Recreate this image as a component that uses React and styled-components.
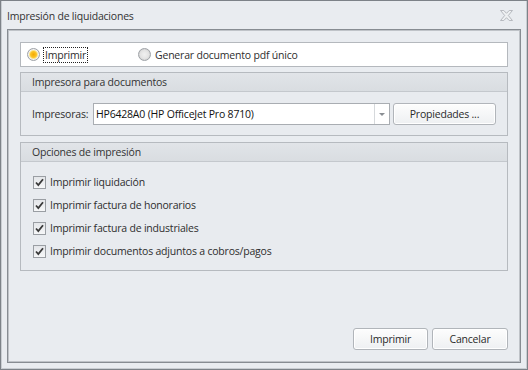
import React from "react";
import styled, { createGlobalStyle } from "styled-components";

const Global = createGlobalStyle`
  html, body { margin: 0; padding: 0; background: #e9ecf0; }
  * { box-sizing: border-box; }
  body {
    font-family: "Open Sans", "Noto Sans", sans-serif;
    font-size: 10.5px;
    letter-spacing: -0.2px;
    color: #2e2e2e;
  }
`;

const Window = styled.div`
  width: 528px;
  height: 370px;
  border: 1px solid #7d8288;
  box-shadow: inset 1px 0 0 #c9cdd2, inset -1px 0 0 #c9cdd2, inset 0 -1px 0 #c9cdd2;
  background: #e9ecf0;
  display: flex;
  flex-direction: column;
`;

const TitleBar = styled.div`
  height: 28px;
  flex: none;
  display: flex;
  align-items: center;
  justify-content: space-between;
  padding: 1px 14px 0 6px;
  color: #333;
`;

const Frame = styled.div`
  flex: 1;
  margin: 0 6px 6px 6px;
  border: 1px solid #878c92;
  box-shadow: inset 0 0 0 1px #bfc3c8;
  padding: 12px;
  display: flex;
  flex-direction: column;
`;

const RadioBar = styled.div`
  height: 25px;
  background: #fff;
  border: 1px solid #b4b8bd;
  display: flex;
  align-items: center;
  padding-left: 6px;
  flex: none;
`;

const RadioItem = styled.label`
  display: flex;
  align-items: center;
  gap: 4px;
  width: ${(p) => p.$w || "auto"};
`;

const RadioDot = styled.span`
  width: 13px;
  height: 13px;
  border-radius: 50%;
  border: 1px solid #9ea2a7;
  background: ${(p) =>
    p.$on
      ? "radial-gradient(circle, #f5a900 0, #fbc52a 3px, #fde48a 4px, #f3f3f3 5px, #d8d8d8 6px)"
      : "radial-gradient(circle, #f0f0f0 0, #e4e4e4 4px, #cfcfcf 6px)"};
  flex: none;
`;

const FocusText = styled.span`
  outline: 1px dotted #222;
  outline-offset: 0;
  padding: 0 1px;
  line-height: 14px;
`;

const Group = styled.div`
  border: 1px solid #b6babf;
  background: #e8ebef;
  margin-top: ${(p) => p.$mt}px;
  flex: none;
`;

const GroupHeader = styled.div`
  height: 19px;
  background: linear-gradient(#e1e4e8, #d9dde1);
  border-bottom: 1px solid #c4c8cd;
  display: flex;
  align-items: center;
  padding-left: 11px;
  color: #333;
`;

const PrinterBody = styled.div`
  padding: 11px 10px 10px 11px;
  display: flex;
  align-items: center;
`;

const Label = styled.span`
  width: 61px;
  flex: none;
`;

const Combo = styled.div`
  width: 297px;
  height: 22px;
  background: #fff;
  border: 1px solid #a9adb2;
  display: flex;
  align-items: stretch;
`;

const ComboText = styled.div`
  flex: 1;
  display: flex;
  align-items: center;
  padding-left: 2px;
  color: #111;
`;

const ComboArrow = styled.div`
  width: 15px;
  border-left: 1px solid #d6d9dc;
  display: flex;
  align-items: center;
  justify-content: center;
  &::after {
    content: "";
    border-left: 3px solid transparent;
    border-right: 3px solid transparent;
    border-top: 3px solid #8a8e93;
  }
`;

const Button = styled.button`
  font: inherit;
  letter-spacing: inherit;
  color: #2a2a2a;
  width: ${(p) => p.$w}px;
  height: 22px;
  margin-left: ${(p) => p.$ml || 0}px;
  border: 1px solid #b1b5ba;
  border-radius: 3px;
  background: linear-gradient(#fdfdfd, #eef0f2);
  box-shadow: inset 0 0 0 1px #fff;
  padding: 0;
  display: flex;
  align-items: center;
  justify-content: center;
`;

const OptionsBody = styled.div`
  padding: 13px 0 12px 12px;
  display: flex;
  flex-direction: column;
  gap: 9px;
`;

const CheckRow = styled.label`
  display: flex;
  align-items: center;
  gap: 4px;
  height: 14px;
`;

const CheckBox = styled.span`
  width: 13px;
  height: 13px;
  border: 1px solid #9a9ea3;
  background: linear-gradient(#e4e6e9, #f6f7f8);
  display: flex;
  align-items: center;
  justify-content: center;
  flex: none;
`;

const Footer = styled.div`
  margin-top: auto;
  display: flex;
  justify-content: flex-end;
`;

const Check = () => (
  <svg width="9" height="9" viewBox="0 0 9 9">
    <path d="M1 4.5 L3.3 7 L8 1.2" fill="none" stroke="#3a3a3a" strokeWidth="1.8" />
  </svg>
);

const CloseIcon = () => (
  <svg width="13" height="11" viewBox="0 0 14 12">
    <path
      d="M0.5 0.5 H4 L7 3.6 L10 0.5 H13.5 L9 6 L13.5 11.5 H10 L7 8.4 L4 11.5 H0.5 L5 6 Z"
      fill="#eef0f2"
      stroke="#b0b4b9"
      strokeWidth="1"
    />
  </svg>
);

const options = [
  "Imprimir liquidación",
  "Imprimir factura de honorarios",
  "Imprimir factura de industriales",
  "Imprimir documentos adjuntos a cobros/pagos",
];

export default function App() {
  return (
    <>
      <Global />
      <Window>
        <TitleBar>
          <span>Impresión de liquidaciones</span>
          <CloseIcon />
        </TitleBar>
        <Frame>
          <RadioBar>
            <RadioItem $w="111px">
              <RadioDot $on />
              <FocusText>Imprimir</FocusText>
            </RadioItem>
            <RadioItem>
              <RadioDot />
              <span>Generar documento pdf único</span>
            </RadioItem>
          </RadioBar>
          <Group $mt={5}>
            <GroupHeader>Impresora para documentos</GroupHeader>
            <PrinterBody>
              <Label>Impresoras:</Label>
              <Combo>
                <ComboText>HP6428A0 (HP OfficeJet Pro 8710)</ComboText>
                <ComboArrow />
              </Combo>
              <Button $w={103} $ml={3}>Propiedades ...</Button>
            </PrinterBody>
          </Group>
          <Group $mt={6}>
            <GroupHeader>Opciones de impresión</GroupHeader>
            <OptionsBody>
              {options.map((o) => (
                <CheckRow key={o}>
                  <CheckBox>
                    <Check />
                  </CheckBox>
                  <span>{o}</span>
                </CheckRow>
              ))}
            </OptionsBody>
          </Group>
          <Footer>
            <Button $w={75}>Imprimir</Button>
            <Button $w={76} $ml={4}>Cancelar</Button>
          </Footer>
        </Frame>
      </Window>
    </>
  );
}
